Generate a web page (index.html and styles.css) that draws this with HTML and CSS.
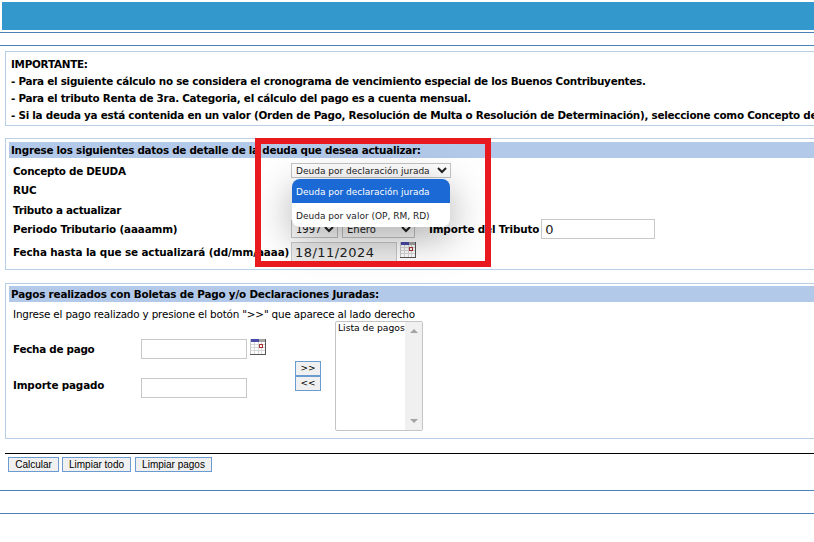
FILE: index.html
```html
<!DOCTYPE html>
<html lang="es">
<head>
<meta charset="utf-8">
<title>Actualización de deuda</title>
<link rel="stylesheet" href="styles.css">
</head>
<body>
<div class="page">
  <header class="banner"></header>
  <div class="subnav"></div>

  <section class="box notice">
    <p>IMPORTANTE:</p>
    <p>- Para el siguiente cálculo no se considera el cronograma de vencimiento especial de los Buenos Contribuyentes.</p>
    <p>- Para el tributo Renta de 3ra. Categoria, el cálculo del pago es a cuenta mensual.</p>
    <p>- Si la deuda ya está contenida en un valor (Orden de Pago, Resolución de Multa o Resolución de Determinación), seleccione como Concepto de</p>
  </section>

  <section class="box detail">
    <h2 class="bar">Ingrese los siguientes datos de detalle de la deuda que desea actualizar:</h2>
    <div class="row r1">
      <label class="lbl">Concepto de DEUDA</label>
      <select class="sel sel-concept"><option>Deuda por declaración jurada</option></select>
    </div>
    <div class="row r2"><label class="lbl">RUC</label></div>
    <div class="row r3"><label class="lbl">Tributo a actualizar</label></div>
    <div class="row r4">
      <label class="lbl wide">Periodo Tributario (aaaamm)</label>
      <select class="sel sel-year"><option>1997</option></select>
      <select class="sel sel-month"><option>Enero</option></select>
      <label class="lbl imp-lbl wide">Importe del Tributo</label>
      <input class="inp inp-imp" value="0">
    </div>
    <div class="row r5">
      <label class="lbl wider">Fecha hasta la que se actualizará (dd/mm/aaaa)</label>
      <input class="inp inp-date" value="18/11/2024" readonly>
      <svg class="cal" viewBox="0 0 16 16" width="16" height="16"><use href="#calendar"/></svg>
    </div>
  </section>

  <section class="box payments">
    <h2 class="bar bar-pay">Pagos realizados con Boletas de Pago y/o Declaraciones Juradas:</h2>
    <p class="hint">Ingrese el pago realizado y presione el botón "&gt;&gt;" que aparece al lado derecho</p>
    <div class="pay-body">
      <div class="pay-fields">
        <div class="pay-row pay-date">
          <label class="lbl pay-lbl">Fecha de pago</label>
          <input class="inp inp-pay">
          <svg class="cal" viewBox="0 0 16 16" width="16" height="16"><use href="#calendar"/></svg>
        </div>
        <div class="pay-row pay-amount">
          <label class="lbl pay-lbl lift wide">Importe pagado</label>
          <input class="inp inp-pay">
        </div>
      </div>
      <div class="movers">
        <button class="btn mover">&gt;&gt;</button>
        <button class="btn mover">&lt;&lt;</button>
      </div>
      <div class="listbox">
        <div class="list-text">Lista de pagos</div>
        <div class="scroll">
          <span class="tri up"></span>
          <span class="tri down"></span>
        </div>
      </div>
    </div>
  </section>

  <div class="actions">
    <button class="btn b-calc">Calcular</button>
    <button class="btn b-all">Limpiar todo</button>
    <button class="btn b-pay">Limpiar pagos</button>
  </div>
  <div class="foot-a"></div>
  <div class="foot-b"></div>
</div>

<div class="popup">
  <div class="opt on">Deuda por declaración jurada</div>
  <div class="opt">Deuda por valor (OP, RM, RD)</div>
</div>
<div class="mark"></div>

<svg class="defs" width="0" height="0" aria-hidden="true">
  <symbol id="calendar" viewBox="0 0 16 16">
    <rect x="0" y="0" width="16" height="16" fill="#c8c8c8"/>
    <rect x="15" y="0" width="1" height="16" fill="#555"/>
    <rect x="0" y="15" width="16" height="1" fill="#555"/>
    <rect x="1" y="3" width="14" height="12" fill="#fff"/>
    <rect x="1" y="0" width="8" height="3" fill="#4a4aa8"/>
    <rect x="9" y="0" width="6" height="3" fill="#a6a6a6"/>
    <path d="M1 5.5h14M1 8.5h14M1 11.5h14M4.5 3v12M8.5 3v12M11.5 3v12" stroke="#d8d8d8" stroke-width="1" fill="none"/>
    <rect x="9.5" y="5.5" width="3" height="3" fill="#fff" stroke="#a83232"/>
  </symbol>
</svg>
</body>
</html>
```
FILE: styles.css
```css
html, body {
  margin: 0;
  padding: 0;
  width: 814px;
  height: 542px;
  overflow: hidden;
  background: #fff;
}
body {
  position: relative;
  font-family: "DejaVu Sans", Verdana, sans-serif;
  font-size: 10.4px;
  letter-spacing: -0.18px;
  color: #000;
}
.page { width: 814px; overflow: hidden; }
.banner {
  height: 28px;
  margin: 2px 0 0 2px;
  background: #3399cc;
}
.subnav {
  height: 12px;
  margin-top: 2px;
  border-top: 1px solid #4a80b8;
  border-bottom: 1px solid #4a80b8;
}
.box {
  box-sizing: border-box;
  width: 1000px;
  margin-left: 5px;
  border: 1px solid #b8cfe8;
}
.notice {
  height: 75px;
  margin-top: 5px;
  padding: 4px 5px 0;
  font-weight: bold;
  letter-spacing: -0.26px;
  white-space: nowrap;
}
.notice p { margin: 0; height: 17px; line-height: 17px; }
.detail {
  height: 132px;
  margin-top: 12px;
  padding: 3px 3px 0;
}
.bar {
  margin: 0;
  height: 16px;
  line-height: 17px;
  padding-left: 2px;
  background: #b3c9e9;
  font-size: 10.4px;
  font-weight: bold;
  letter-spacing: -0.27px;
}
.bar-pay { letter-spacing: -0.19px; }
.row {
  display: flex;
  align-items: center;
  padding-left: 4px;
}
.r1 { height: 19px; margin-top: 3px; }
.r2 { height: 19px; }
.r3 { height: 20px; margin-top: 1px; }
.r4 { height: 20px; margin-top: -1px; }
.r5 { height: 22px; margin-top: 2px; }
.lbl { font-weight: bold; letter-spacing: -0.28px; white-space: nowrap; }
.lbl.wide { letter-spacing: -0.16px; }
.lbl.wider { letter-spacing: -0.1px; }
.row > .lbl:first-child { width: 278px; flex: none; }
.sel {
  box-sizing: border-box;
  height: 15px;
  padding: 0;
  background: #fff;
  border: 1px solid #c4c4c4;
  border-radius: 0;
  font-family: "DejaVu Sans", Verdana, sans-serif;
  font-size: 9px;
  color: #222;
}
.sel-concept { width: 160px; }
.sel-year { width: 47px; height: 18px; font-size: 10px; }
.sel-month { width: 73px; height: 18px; margin-left: 4px; font-size: 10px; }
.imp-lbl { margin-left: 14px; }
.inp {
  box-sizing: border-box;
  padding: 0 3px;
  background: #fff;
  border: 1px solid #c8c8c8;
  font-family: "DejaVu Sans", Verdana, sans-serif;
  font-size: 13px;
  color: #222;
  border-radius: 0;
}
.inp-imp { width: 114px; height: 20px; margin-left: 2px; }
.inp-date { width: 106px; height: 20px; background: #ececec; letter-spacing: .45px; }
.cal { display: block; flex: none; }
.r5 .cal { margin: -5px 0 0 3px; }
.payments {
  height: 156px;
  margin-top: 13px;
  padding: 2px 3px 0;
}
.hint { margin: 4px 0 0 4px; height: 16px; line-height: 16px; }
.pay-body { display: flex; align-items: flex-start; padding-left: 4px; }
.pay-fields { width: 282px; flex: none; margin-top: 17px; }
.pay-row { display: flex; align-items: center; height: 20px; }
.pay-amount { margin-top: 19px; }
.pay-lbl { width: 128px; flex: none; }
.lift { padding-bottom: 6px; }
.pay-date .cal { margin: -4px 0 0 3px; }
.inp-pay { width: 106px; height: 20px; }
.movers {
  width: 40px;
  flex: none;
  display: flex;
  flex-direction: column;
  margin-top: 39px;
}
.btn {
  box-sizing: border-box;
  height: 15px;
  margin: 0;
  padding: 0;
  background: #f0f0f0;
  border: 1px solid #6b9bd0;
  border-radius: 0;
  font-family: "Liberation Sans", Arial, sans-serif;
  font-size: 10px;
  letter-spacing: 0;
  color: #000;
}
.b-calc { width: 51px; }
.b-all { width: 69px; }
.b-pay { width: 77px; margin-left: 1px; }
.mover {
  width: 26px;
  padding: 0;
  line-height: 1;
  font-family: "DejaVu Sans", Verdana, sans-serif;
  font-size: 9px;
}
.listbox {
  box-sizing: border-box;
  display: flex;
  width: 88px;
  height: 110px;
  margin-top: -1px;
  border: 1px solid #c4c4c4;
  border-radius: 2px;
}
.list-text {
  flex: 1;
  padding: 0 0 0 2px;
  font-size: 9.2px;
  letter-spacing: 0;
  line-height: 11px;
  white-space: nowrap;
}
.scroll {
  width: 17px;
  flex: none;
  display: flex;
  flex-direction: column;
  justify-content: space-between;
  align-items: center;
  padding: 7px 0;
  box-sizing: border-box;
  background: #f0f0f0;
}
.tri {
  width: 0;
  height: 0;
  border-left: 4px solid transparent;
  border-right: 4px solid transparent;
}
.tri.up { border-bottom: 4px solid #a3a3a3; }
.tri.down { border-top: 4px solid #a3a3a3; }
.actions {
  display: flex;
  gap: 3px;
  height: 37px;
  margin-top: 14px;
  margin-left: 5px;
  padding: 3px 0 0 3px;
  box-sizing: border-box;
  border-top: 1px solid #000;
}
.foot-a { border-top: 1px solid #4a80b8; height: 22px; }
.foot-b { border-top: 1px solid #4a80b8; }
.popup {
  position: absolute;
  left: 292px;
  top: 179px;
  width: 158px;
  height: 48px;
  background: #fff;
  border-radius: 8px;
  overflow: hidden;
  box-shadow: 0 10px 40px rgba(0, 0, 0, .35);
  font-size: 9px;
  letter-spacing: 0;
  color: #222;
}
.opt { height: 24px; line-height: 26px; padding-left: 4px; white-space: nowrap; }
.opt.on { background: #1a69d4; color: #fff; }
.mark {
  position: absolute;
  left: 255px;
  top: 138px;
  width: 224px;
  height: 117px;
  border: 6px solid #e8191f;
}
.defs { position: absolute; }
```
